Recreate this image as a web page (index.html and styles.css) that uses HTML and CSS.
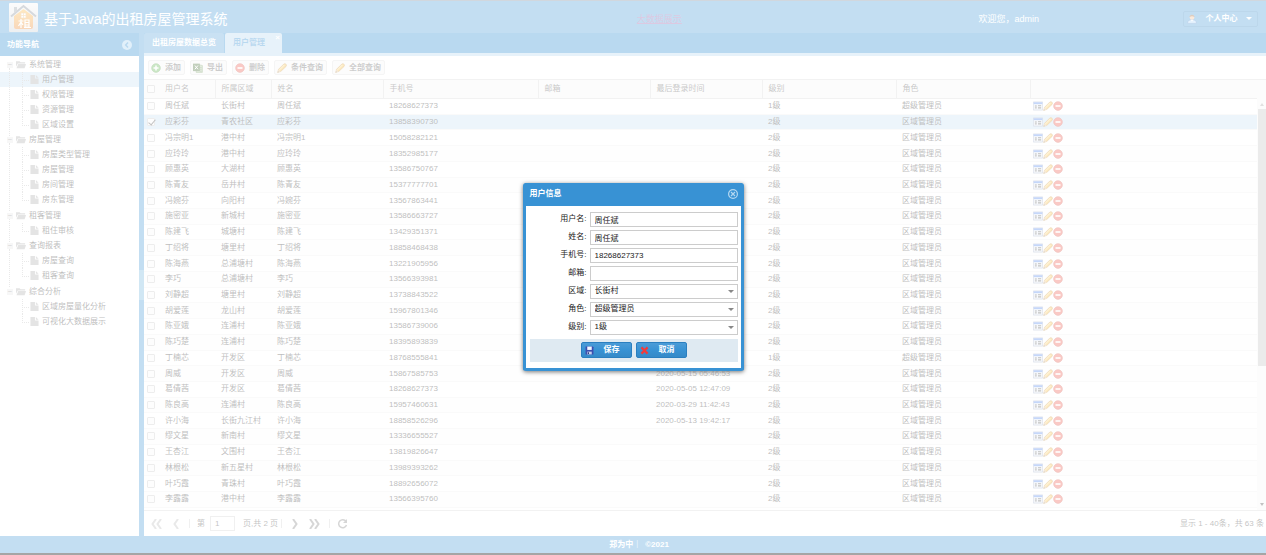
FILE: index.html
```html
<!DOCTYPE html>
<html lang="zh-CN">
<head>
<meta charset="utf-8">
<title>基于Java的出租房屋管理系统</title>
<link rel="stylesheet" href="styles.css">
</head>
<body>
<svg class="sprite" aria-hidden="true">
  <defs>
    <linearGradient id="g-house" x1="0" y1="0" x2="0" y2="1"><stop offset="0" stop-color="#ffb52e"/><stop offset="1" stop-color="#e87a1c"/></linearGradient>
    <linearGradient id="g-plate" x1="0" y1="0" x2="0" y2="1"><stop offset="0" stop-color="#f4f4f4"/><stop offset="1" stop-color="#c4cad0"/></linearGradient>
  </defs>
  <symbol id="i-add" viewBox="0 0 16 16"><circle cx="8" cy="8" r="7" fill="#4fae3c" stroke="#3b8a2b"/><path d="M8 4v8M4 8h8" stroke="#fff" stroke-width="2.4"/></symbol>
  <symbol id="i-del" viewBox="0 0 16 16"><circle cx="8" cy="8" r="7" fill="#ee4a3c" stroke="#c9382c"/><path d="M4 8h8" stroke="#fff" stroke-width="2.6"/></symbol>
  <symbol id="i-xls" viewBox="0 0 16 16"><path d="M6 2l9 2v11H5z" fill="#a9c69a" stroke="#4a7a34"/><path d="M0 1h11v12H0z" fill="#335f20"/><path d="M3 4l5 6M8 4l-5 6" stroke="#fff" stroke-width="1.6"/><path d="M11 7h3M11 10h3M11 13h3" stroke="#3c6a28"/></symbol>
  <symbol id="i-pen" viewBox="0 0 16 16"><path d="M1 15l1.500-5L11 1.500q2-1.200 3.500.5t0 3.500L6 13.500z" fill="#f5b62c" stroke="#b9761a"/><path d="M4 11l8-8" stroke="#fde9a6" stroke-width="1.500"/><path d="M1 15l1.500-5L6 13.500z" fill="#e2b984"/><path d="M1 15l.7-2 1.300 1.300z" fill="#444"/></symbol>
  <symbol id="i-form" viewBox="0 0 16 16"><path d="M.5 1.500h15v13H.5z" fill="#e6ecf5" stroke="#6f84ac"/><path d="M1 2h14v3H1z" fill="#3f78ea"/><path d="M3 8h3M3 11h3" stroke="#222" stroke-width="1.600"/><path d="M8 7.500h5M8 11h5" stroke="#333" stroke-width="1.800"/></symbol>
  <symbol id="i-folder" viewBox="0 0 11 9"><path d="M0 1h4l1 1h5v1.500H2L0 7z"/><path d="M2.500 4H11L9.500 8.500H.5z"/></symbol>
  <symbol id="i-file" viewBox="0 0 9 10"><path d="M0 0h5v4h4v6H0z"/><path d="M6 0l3 3H6z"/></symbol>
  <symbol id="i-user" viewBox="0 0 16 16"><path d="M1 15q-.5-6 7-6t7 6z" fill="#a9d4fb" stroke="#1c62b4"/><path d="M6 9l2 3 2-3z" fill="#fff"/><circle cx="8" cy="5.500" r="3.700" fill="#f2b98b"/><path d="M4 5Q4 1 8 1t4 4Q8 2 4 5z" fill="#8a5428"/></symbol>
  <symbol id="i-save" viewBox="0 0 16 16"><path d="M1 1h13l1 1v13H1z" fill="#3b4fb0"/><path d="M4 1h8v6H4z" fill="#f4f6ff"/><path d="M4 10h8v5H4z" fill="#c9d2ee"/><path d="M5 11h2v3H5z" fill="#28367c"/></symbol>
  <symbol id="i-x" viewBox="0 0 16 16"><path d="M2.500 2.500l11 11M13.500 2.500l-11 11" stroke="#f23b3b" stroke-width="4"/></symbol>
</svg>

<header class="top">
  <div class="brand">
    <svg class="logo" viewBox="0 0 29 29" role="img" aria-label="房屋"><rect width="29" height="29" rx="1" fill="url(#g-plate)"/><path d="M5 13l9.500-7L24 13v11q0 2-2 2H7q-2 0-2-2z" fill="url(#g-house)"/><path d="M2 13.500L14.500 3 27 13.500" fill="none" stroke="#76808c" stroke-width="2"/><path d="M5 4h3v4L5 10z" fill="#8d969f"/><path d="M12 10h5v5h-5zM14.500 10v5M12 12.500h5" fill="#fff" stroke="#e4aa5c" stroke-width=".7"/><path d="M9.500 18h5M12 16v9M9.500 23l2.500-4 2 3M16 17h4v7h-4zM16 19.500h4M16 22h4M15 24.500h7" fill="none" stroke="#fff" stroke-width="1.200"/></svg>
    <h1>基于Java的出租房屋管理系统</h1>
  </div>
  <a class="bigdata" href="#">大数据展示</a>
  <div class="account">
    <span>欢迎您，admin</span>
    <button class="me" type="button"><svg><use href="#i-user"/></svg><span>个人中心</span><i class="caret"></i></button>
  </div>
</header>

<main class="work">
  <nav class="side">
    <h2>功能导航<svg viewBox="0 0 10 10"><circle cx="5" cy="5" r="5" fill="#9ccbee"/><path d="M6 2.500L3.700 5 6 7.500" fill="none" stroke="#157fcc" stroke-width="1.500"/></svg></h2>
    <ul class="tree" id="tree"></ul>
  </nav>
  <div class="split"><i></i></div>
  <section class="center">
    <div class="tabs" role="tablist">
      <button type="button" role="tab">出租房屋数据总览</button>
      <button type="button" role="tab" class="on" aria-selected="true">用户管理<span>×</span></button>
    </div>
    <div class="tools">
      <button type="button"><svg><use href="#i-add"/></svg>添加</button>
      <button type="button"><svg><use href="#i-xls"/></svg>导出</button>
      <button type="button"><svg><use href="#i-del"/></svg>删除</button>
      <button type="button"><svg><use href="#i-pen"/></svg>条件查询</button>
      <button type="button"><svg><use href="#i-pen"/></svg>全部查询</button>
    </div>
    <div class="gridbox">
      <table class="grid">
        <colgroup><col class="c-check"><col class="c-s"><col class="c-s"><col class="c-m"><col class="c-l"><col class="c-m"><col class="c-m"><col class="c-r"><col class="c-r"><col></colgroup>
        <thead><tr><th><input type="checkbox" aria-label="全选"></th><th>用户名</th><th>所属区域</th><th>姓名</th><th>手机号</th><th>邮箱</th><th>最后登录时间</th><th>级别</th><th>角色</th><th></th></tr></thead>
        <tbody id="rows"></tbody>
      </table>
      <div class="scroll"><i class="up"></i><b></b><i class="down"></i></div>
    </div>
    <div class="pager">
      <button type="button" class="off" aria-label="首页"><svg viewBox="0 0 11 10"><path d="M5 0L1.500 5 5 10M10 0L6.500 5 10 10"/></svg></button>
      <button type="button" class="off" aria-label="上一页"><svg viewBox="0 0 11 10"><path d="M7 0L3.500 5 7 10"/></svg></button>
      <i class="bar"></i>
      <label for="page">第</label><input id="page" value="1"><span>页,共 2 页</span>
      <i class="bar"></i>
      <button type="button" aria-label="下一页"><svg viewBox="0 0 11 10"><path d="M4 0l3.500 5L4 10"/></svg></button>
      <button type="button" aria-label="末页"><svg viewBox="0 0 11 10"><path d="M1 0l3.500 5L1 10M6 0l3.500 5L6 10"/></svg></button>
      <i class="bar"></i>
      <button type="button" aria-label="刷新"><svg viewBox="0 0 11 10"><path d="M9 2.500A4 4 0 1 0 9.500 6" stroke-width="1.500"/><path d="M10 0v4H6z" class="fill"/></svg></button>
      <span class="total">显示 1 - 40条，共 63 条</span>
    </div>
  </section>
</main>
<footer class="foot"><span>郑为中｜</span><span>©2021</span></footer>

<div class="mask">
  <form class="dialog" role="dialog" aria-labelledby="dlg">
    <div class="dlg-head"><h2 id="dlg">用户信息</h2><button type="button" aria-label="关闭"><svg viewBox="0 0 10 10"><circle cx="5" cy="5" r="4.400"/><path d="M3 3l4 4M7 3L3 7"/></svg></button></div>
    <div class="dlg-body">
      <div class="field"><label for="f1">用户名:</label><input id="f1" value="周任斌"></div>
      <div class="field"><label for="f2">姓名:</label><input id="f2" value="周任斌"></div>
      <div class="field"><label for="f3">手机号:</label><input id="f3" value="18268627373"></div>
      <div class="field"><label for="f4">邮箱:</label><input id="f4" value=""></div>
      <div class="field pick"><label for="f5">区域:</label><select id="f5"><option>长街村</option></select></div>
      <div class="field pick"><label for="f6">角色:</label><select id="f6"><option>超级管理员</option></select></div>
      <div class="field pick"><label for="f7">级别:</label><select id="f7"><option>1级</option></select></div>
      <div class="acts">
        <button type="button"><svg><use href="#i-save"/></svg><span>保存</span></button>
        <button type="button"><svg><use href="#i-x"/></svg><span>取消</span></button>
      </div>
    </div>
  </form>
</div>
<script src="app.js"></script>
</body>
</html>
```

FILE: styles.css
```css
* { box-sizing: border-box; }
html, body { height: 100%; }
body {
  margin: 0;
  display: flex;
  flex-direction: column;
  overflow: hidden;
  border-bottom: 2px solid #a5a5a5;
  background: #fff;
  color: #222;
  font: 8px/10px "Liberation Sans", "Noto Sans CJK SC", sans-serif;
}
button, input, select { font: inherit; color: inherit; margin: 0; padding: 0; }
h1, h2, ul { margin: 0; padding: 0; font-size: 8px; font-weight: normal; }
ul { list-style: none; }
.sprite { position: absolute; width: 0; height: 0; }

.top {
  flex: 0 0 33px;
  display: grid;
  grid-template-columns: 14fr 46px 13fr;
  align-items: center;
  border-top: 1px solid #65798f;
  background: #3892d4;
  color: #fff;
  padding: 0 8px 0 9px;
}
.brand { display: flex; align-items: center; gap: 6px; }
.logo { width: 29px; height: 29px; }
.brand h1 { font-size: 14px; line-height: 20px; padding-top: 3px; }
.bigdata { font-size: 9px; line-height: 12px; color: #8a4a9c; white-space: nowrap; padding-top: 3px; margin-left: 4px; }
.account { display: flex; align-items: center; justify-content: flex-end; gap: 144px; font-size: 9px; padding-top: 3px; }
.me {
  display: flex; align-items: center; justify-content: space-between;
  width: 75px; height: 16px; padding: 0 5px 0 3px;
  border: 1px solid #1f78bd; border-radius: 2px; background: #3892d4;
  font-size: 8px; font-weight: bold; color: #fff;
}
.me svg { width: 10px; height: 10px; }
.caret { border: 3px solid transparent; border-top-color: #fff; border-bottom: 0; }

.work { flex: 1; min-height: 0; display: flex; }
.side { flex: 0 0 139px; }
.side h2 {
  display: flex; align-items: center; justify-content: space-between;
  height: 23px; padding: 0 7px; background: #157fcc; color: #fff; font-weight: bold;
}
.side h2 svg { width: 10px; height: 10px; }
.tree { padding-top: 1px; }
.node { position: relative; display: flex; align-items: center; gap: 3px; height: 15px; padding-left: 16px; }
.node svg { width: 10px; height: 9px; fill: #a3a3a3; }
.leaf { padding-left: 30px; }
.leaf svg { width: 9px; height: 9px; }
.leaf.on { background: #c1ddf1; }
.node a { color: inherit; text-decoration: none; }
.node::before { content: "−"; position: absolute; left: 7px; width: 6px; height: 6px; background: #e4e4e4; color: #777; line-height: 6px; text-align: center; }
.leaf::before { content: ""; left: 22px; top: 0; width: 6px; height: 8px; border: 1px dotted #b5b5b5; border-width: 0 0 1px 1px; background: none; }
.leaf:not(:last-child)::after { content: ""; position: absolute; left: 22px; top: 8px; height: 7px; border-left: 1px dotted #b5b5b5; }
.group { position: relative; }
.group:nth-child(even) { margin-bottom: 1px; }
.group:not(:last-child)::after { content: ""; position: absolute; left: 9px; top: 11px; bottom: -4px; border-left: 1px dotted #b5b5b5; }
.split { flex: 0 0 5px; display: flex; align-items: center; background: #3892d4; }
.split i { flex: 1; height: 30px; background: #67add9; }

.center { flex: 1; min-width: 0; display: flex; flex-direction: column; }
.tabs { display: flex; gap: 1px; height: 23px; background: #157fcc; border-bottom: 3px solid #add2ed; }
.tabs button { position: relative; border: 0; padding: 0 8px; background: #4b9cd7; color: #fff; font-weight: bold; border-radius: 2px 2px 0 0; }
.tabs .on { padding: 0 17px 0 8px; background: #add2ed; color: #157fcc; }
.tabs span { position: absolute; right: 2px; top: 1px; color: #fff; line-height: 8px; }
.tools { display: flex; align-items: center; gap: 5px; height: 23px; padding-left: 4px; }
.tools button {
  display: flex; align-items: center; gap: 4px; height: 15px; padding: 0 3px 0 2px;
  border: 1px solid #dcdcdc; border-radius: 2px; background: #f5f5f5; color: #555; font-weight: bold;
}
.tools svg { width: 10px; height: 10px; }

.gridbox { position: relative; flex: 1; min-height: 0; padding-bottom: 2px; border-bottom: 1px solid #d4d4d4; }
.grid { width: 100%; height: 100%; table-layout: fixed; border-collapse: collapse; }
.c-check { width: 15px; }
.c-s { width: 56px; }
.c-m { width: 112px; }
.c-l { width: 155px; }
.c-r { width: 134px; }
.grid th, .grid td { padding: 0 0 0 6px; text-align: left; font-weight: normal; white-space: nowrap; }
.grid th { height: 19px; background: #f5f5f5; border-top: 1px solid #d4d4d4; border-bottom: 1px solid #d4d4d4; color: #444; }
.grid th + th + th { border-left: 1px solid #d4d4d4; }
.grid th:first-child, .grid td:first-child { padding-left: 3px; }
.grid td:last-child { padding-left: 3px; }
.grid tbody tr { border-bottom: 1px solid #ededed; }
.grid tbody tr:nth-child(even) { background: #fafafa; }
.grid tbody .on, .grid tbody .on:nth-child(even) { background: #c1ddf1; }
.grid input {
  appearance: none; display: block; width: 8px; height: 8px;
  border: 1px solid #c4c4c4; border-radius: 1px; background: #f8f8f8;
}
.grid input:checked { position: relative; }
.grid input:checked::after { content: ""; position: absolute; left: 2px; top: -1px; width: 3px; height: 6px; border: solid #333; border-width: 0 1px 1px 0; transform: rotate(40deg); }
.ops { display: flex; }
.ops button { width: 10px; height: 10px; border: 0; background: none; }
.ops svg { display: block; width: 10px; height: 10px; }
.scroll {
  position: absolute; right: 0; top: 19px; bottom: 0; width: 9px;
  display: flex; flex-direction: column; align-items: center; background: #f4f4f4; padding: 5px 0 4px;
}
.scroll b { width: 8px; height: 257px; margin: 3px 0 auto; background: #bcbcbc; }
.scroll i { border: 2px solid transparent; }
.scroll .up { border-top: 0; border-bottom: 3px solid #999; }
.scroll .down { border-bottom: 0; border-top: 3px solid #333; }

.pager { display: flex; align-items: center; height: 25px; padding: 0 2px 0 7px; color: #333; }
.pager button { width: 11px; height: 10px; margin-right: 9px; border: 0; background: none; }
.pager .off + .off { margin-right: 7px; }
.pager svg { display: block; width: 11px; height: 10px; fill: none; stroke: #777; stroke-width: 2; }
.pager .fill { fill: #777; stroke: none; }
.pager .off svg { stroke: #b4b4b4; }
.bar { width: 1px; height: 9px; margin-right: 7px; background: #ccc; }
.pager input { width: 25px; height: 15px; margin: 0 8px 0 5px; padding: 0 4px; border: 1px solid #ccc; background: #fff; }
.pager span { margin-right: 3px; }
.pager .total { margin: 0 0 0 auto; }
.foot { flex: 0 0 17px; display: flex; align-items: center; justify-content: center; gap: 4px; padding-left: 12px; background: #3892d4; color: #fff; font-weight: bold; }

.mask { position: absolute; inset: 0 0 2px; display: flex; align-items: center; justify-content: center; background: rgba(255, 255, 255, .7); }
.dialog { width: 221px; border: 3px solid #3892d4; border-top-width: 0; border-radius: 3px; background: #3892d4; box-shadow: 0 1px 4px #777; color: #222; }
.dlg-head { display: flex; align-items: center; justify-content: space-between; height: 23px; padding: 0 3px 0 4px; color: #fff; }
.dlg-head h2 { font-weight: bold; }
.dlg-head button { width: 10px; height: 10px; border: 0; background: none; }
.dlg-head svg { display: block; width: 10px; height: 10px; fill: none; stroke: #b4d7f0; stroke-width: 1.200; }
.dlg-body { display: flex; flex-direction: column; gap: 3px; padding: 6px 3px 6px 4px; background: #fff; }
.field { position: relative; display: grid; grid-template-columns: 57px 1fr; gap: 3px; align-items: center; }
.field label { text-align: right; }
.field input, .field select { width: 100%; height: 15px; padding: 0 4px; border: 1px solid #ccc; border-radius: 0; background: #fff; appearance: none; }
.pick::after { content: ""; position: absolute; right: 4px; top: 6px; border: 3px solid transparent; border-top-color: #888; border-bottom: 0; pointer-events: none; }
.acts { display: flex; justify-content: center; align-items: center; gap: 4px; height: 23px; margin-top: 1px; background: #dfeaf2; }
.acts button {
  display: flex; align-items: center; width: 51px; height: 16px; padding: 0 1px 0 3px;
  border: 1px solid #2a7fc0; border-radius: 2px; background: linear-gradient(#4b9cd7, #3892d4 50%, #358ac8);
  color: #fff; font-weight: bold;
}
.acts svg { width: 9px; height: 9px; }
.acts span { flex: 1; text-align: center; }
```

FILE: app.js
```js
const menu = [
  ['系统管理', ['用户管理', '权限管理', '资源管理', '区域设置']],
  ['房屋管理', ['房屋类型管理', '房屋管理', '房间管理', '房东管理']],
  ['租客管理', ['租住审核']],
  ['查询报表', ['房屋查询', '租客查询']],
  ['综合分析', ['区域房屋量化分析', '可视化大数据展示']]
];
document.getElementById('tree').innerHTML = menu.map(([name, items], g) =>
  `<li class="group"><div class="node"><svg><use href="#i-folder"/></svg>${name}</div><ul>` +
  items.map((t, i) => `<li class="node leaf${g + i === 0 ? ' on' : ''}"><svg><use href="#i-file"/></svg><a href="#">${t}</a></li>`).join('') +
  '</ul></li>').join('');

const users = [
  ['周任斌', '长街村', '18268627373'],
  ['应彩芬', '青农社区', '13858390730'],
  ['冯宗明1', '港中村', '15058282121'],
  ['应玲玲', '港中村', '18352985177'],
  ['顾惠英', '大湖村', '13586750767'],
  ['陈青友', '岳井村', '15377777701'],
  ['冯婉芬', '向阳村', '13567863441'],
  ['施密亚', '新城村', '13586663727'],
  ['陈建飞', '城塘村', '13429351371'],
  ['丁绍将', '塘里村', '18858468438'],
  ['陈海燕', '总浦塘村', '13221905956'],
  ['李巧', '总浦塘村', '13566393981'],
  ['刘静超', '塘里村', '13738843522'],
  ['胡爱莲', '龙山村', '15967801346'],
  ['陈亚娥', '连浦村', '13586739006'],
  ['陈巧楚', '连浦村', '18395893839'],
  ['丁楠芯', '开发区', '18768555841'],
  ['周威', '开发区', '15867585753', '2020-05-15 05:46:53'],
  ['葛倩茜', '开发区', '18268627373', '2020-05-05 12:47:09'],
  ['陈良高', '连浦村', '15957460631', '2020-03-29 11:42:43'],
  ['许小海', '长街九江村', '18858526296', '2020-05-13 19:42:17'],
  ['缪文星', '新南村', '13336655527'],
  ['王杏江', '文围村', '13819826647'],
  ['林根松', '新五星村', '13989393262'],
  ['叶巧霞', '青珠村', '18892656072'],
  ['李露露', '港中村', '13566395760']
];
const admins = [0, 16];
const op = (icon, label) => `<button type="button" aria-label="${label}"><svg><use href="#${icon}"/></svg></button>`;
document.getElementById('rows').innerHTML = users.map(([name, area, phone, time = ''], i) => {
  const top = admins.includes(i);
  return `<tr class="${i === 1 ? 'on' : ''}"><td><input type="checkbox" aria-label="${name}"${i === 1 ? ' checked' : ''}></td>` +
    `<td>${name}</td><td>${area}</td><td>${name}</td><td>${phone}</td><td></td><td>${time}</td>` +
    `<td>${top ? 1 : 2}级</td><td>${top ? '超级管理员' : '区域管理员'}</td>` +
    `<td><div class="ops">${op('i-form', '详情')}${op('i-pen', '编辑')}${op('i-del', '删除')}</div></td></tr>`;
}).join('');
```
